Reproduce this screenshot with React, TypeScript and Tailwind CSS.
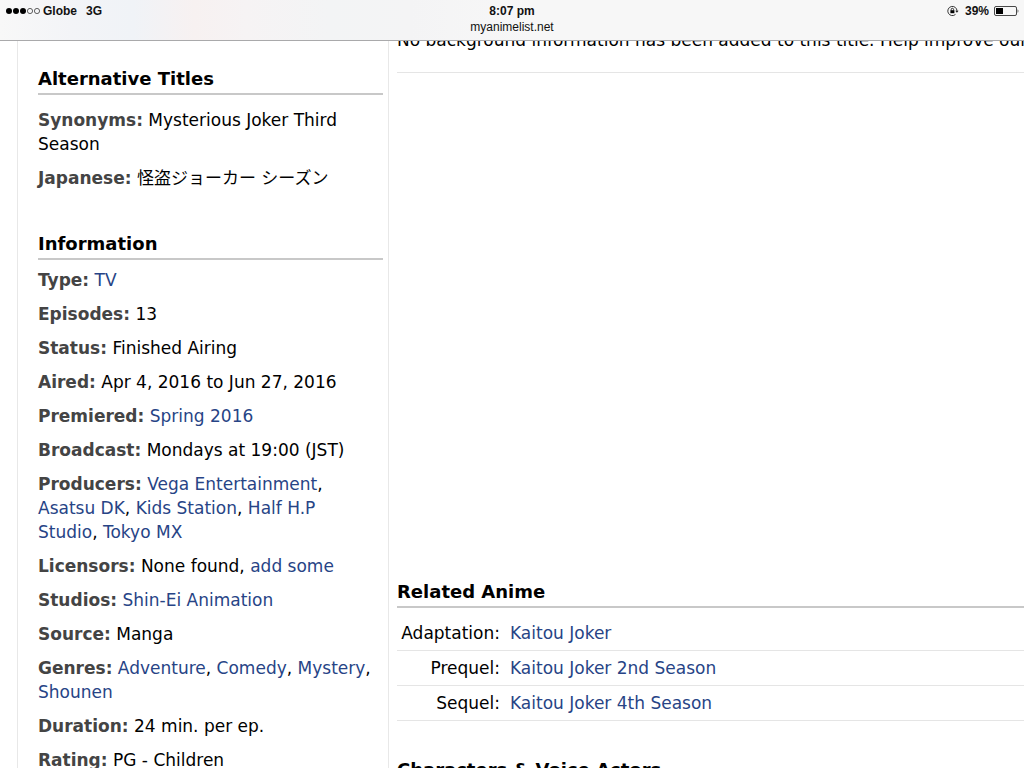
import { Fragment } from 'react';
import type { ReactNode } from 'react';

type InfoRow = {
  label: string;
  text?: string;
  links?: string[];
};

const ALT_TITLES: InfoRow[] = [
  { label: 'Synonyms', text: 'Mysterious Joker Third Season' },
  { label: 'Japanese', text: '怪盗ジョーカー シーズン' },
];

const INFORMATION: InfoRow[] = [
  { label: 'Type', links: ['TV'] },
  { label: 'Episodes', text: '13' },
  { label: 'Status', text: 'Finished Airing' },
  { label: 'Aired', text: 'Apr 4, 2016 to Jun 27, 2016' },
  { label: 'Premiered', links: ['Spring 2016'] },
  { label: 'Broadcast', text: 'Mondays at 19:00 (JST)' },
  { label: 'Producers', links: ['Vega Entertainment', 'Asatsu DK', 'Kids Station', 'Half H.P Studio', 'Tokyo MX'] },
  { label: 'Licensors', text: 'None found, ', links: ['add some'] },
  { label: 'Studios', links: ['Shin-Ei Animation'] },
  { label: 'Source', text: 'Manga' },
  { label: 'Genres', links: ['Adventure', 'Comedy', 'Mystery', 'Shounen'] },
  { label: 'Duration', text: '24 min. per ep.' },
  { label: 'Rating', text: 'PG - Children' },
];

const RELATED = [
  { relation: 'Adaptation', title: 'Kaitou Joker' },
  { relation: 'Prequel', title: 'Kaitou Joker 2nd Season' },
  { relation: 'Sequel', title: 'Kaitou Joker 4th Season' },
];

function SignalDots() {
  return (
    <svg width="36" height="8" viewBox="0 0 36 8" aria-hidden="true">
      {[0, 1, 2, 3, 4].map((i) => (
        <circle
          key={i}
          cx={4 + i * 7}
          cy="4"
          r={i < 3 ? 3 : 2.6}
          fill={i < 3 ? '#000' : 'none'}
          stroke={i < 3 ? 'none' : '#222'}
          strokeWidth="0.7"
        />
      ))}
    </svg>
  );
}

function RotationLock() {
  return (
    <svg width="12" height="12" viewBox="0 0 12 12" fill="none" aria-hidden="true">
      <path d="M10 6a4.6 4.6 0 1 0-1.5 3.4" stroke="#222" strokeWidth="0.9" />
      <path d="M8.2 5.7h3.4L9.9 7.8z" fill="#222" />
      <rect x="3.4" y="5.2" width="4" height="3" fill="#000" />
      <path d="M4.2 5.4V4.5a1.2 1.2 0 0 1 2.4 0v.9" stroke="#000" strokeWidth="0.8" />
    </svg>
  );
}

function Battery() {
  return (
    <svg width="25" height="10" viewBox="0 0 25 10" fill="none" aria-hidden="true">
      <rect x="0.5" y="0.5" width="22" height="9" rx="1.5" stroke="#333" strokeWidth="0.9" />
      <rect x="2" y="2" width="7" height="6" fill="#000" />
      <path d="M23.6 3.2c1 .4 1 3.2 0 3.6z" fill="#333" />
    </svg>
  );
}

function StatusBar() {
  return (
    <header className="relative z-10 grid h-[41px] shrink-0 grid-cols-3 items-start border-b border-[#a9a9ab] bg-[#f6f6f7] bg-[linear-gradient(90deg,#f8f8f8_0%,#f3f4f7_7%,#f0f3f7_13%,#f7f1f1_19%,#f6f3f4_24%,#f3f4f5_32%,#f4f4f5_40%,#f7f7f7_52%)] px-[5px] pt-1 font-['Liberation_Sans',Arial,sans-serif] text-[12px] leading-[14px]">
      <div className="flex items-center font-bold text-[#111]">
        <SignalDots />
        <span className="ml-0.5">Globe</span>
        <span className="ml-[9px]">3G</span>
      </div>
      <div className="text-center">
        <div className="font-bold text-[#111]">8:07 pm</div>
        <div className="mt-0.5 text-[#111]">myanimelist.net</div>
      </div>
      <div className="flex items-center justify-end font-bold text-[#111]">
        <RotationLock />
        <span className="mr-[5px] ml-1.5">39%</span>
        <Battery />
      </div>
    </header>
  );
}

function SectionTitle({ children }: { children: ReactNode }) {
  return (
    <h2 className="border-b-2 border-[#c8c8c8] pb-0.5 text-[18px] leading-6 font-bold whitespace-nowrap">
      {children}
    </h2>
  );
}

function PageLink({ children }: { children: ReactNode }) {
  return (
    <a href="#" className="text-[#274486] hover:underline">
      {children}
    </a>
  );
}

function InfoList({ rows }: { rows: InfoRow[] }) {
  return (
    <div className="flex flex-col gap-2.5 pr-2">
      {rows.map((row) => (
        <div key={row.label}>
          <span className="font-bold text-[#444]">{row.label}:</span> {row.text}
          {row.links?.map((link, i) => (
            <Fragment key={link}>
              {i > 0 && ', '}
              <PageLink>{link}</PageLink>
            </Fragment>
          ))}
        </div>
      ))}
    </div>
  );
}

export default function App() {
  return (
    <div className="flex h-screen flex-col overflow-hidden bg-white font-['DejaVu_Sans','Noto_Sans_CJK_JP',sans-serif] text-[17px] leading-6 text-black">
      <StatusBar />

      <div className="flex min-h-0 flex-1 pl-[17px]">
        <aside className="w-[372px] shrink-0 border-x border-[#e8e8e8] pt-[26px] pr-[5px] pl-5">
          <SectionTitle>Alternative Titles</SectionTitle>
          <div className="pt-[13px]">
            <InfoList rows={ALT_TITLES} />
          </div>
          <div className="pt-[42px]">
            <SectionTitle>Information</SectionTitle>
          </div>
          <div className="pt-2">
            <InfoList rows={INFORMATION} />
          </div>
        </aside>

        {/* scrolled so the first line sits half under the bar */}
        <main className="-mt-[13px] min-w-0 flex-1 pl-2">
          <p className="overflow-hidden border-b border-[#e5e5e5] pb-5 whitespace-nowrap">
            No background information has been added to this title. Help improve our
          </p>
          {/* empty ad slot */}
          <div className="h-[507px]" />
          <SectionTitle>Related Anime</SectionTitle>
          <table className="mt-2 w-full border-collapse">
            <tbody>
              {RELATED.map((item) => (
                <tr key={item.relation} className="border-b border-[#e5e5e5]">
                  <th scope="row" className="w-[103px] py-[5px] text-right font-normal">
                    {item.relation}:
                  </th>
                  <td className="py-[5px] pl-2.5">
                    <PageLink>{item.title}</PageLink>
                  </td>
                </tr>
              ))}
            </tbody>
          </table>
          <div className="pt-[37px]">
            <SectionTitle>Characters &amp; Voice Actors</SectionTitle>
          </div>
        </main>
      </div>
    </div>
  );
}
